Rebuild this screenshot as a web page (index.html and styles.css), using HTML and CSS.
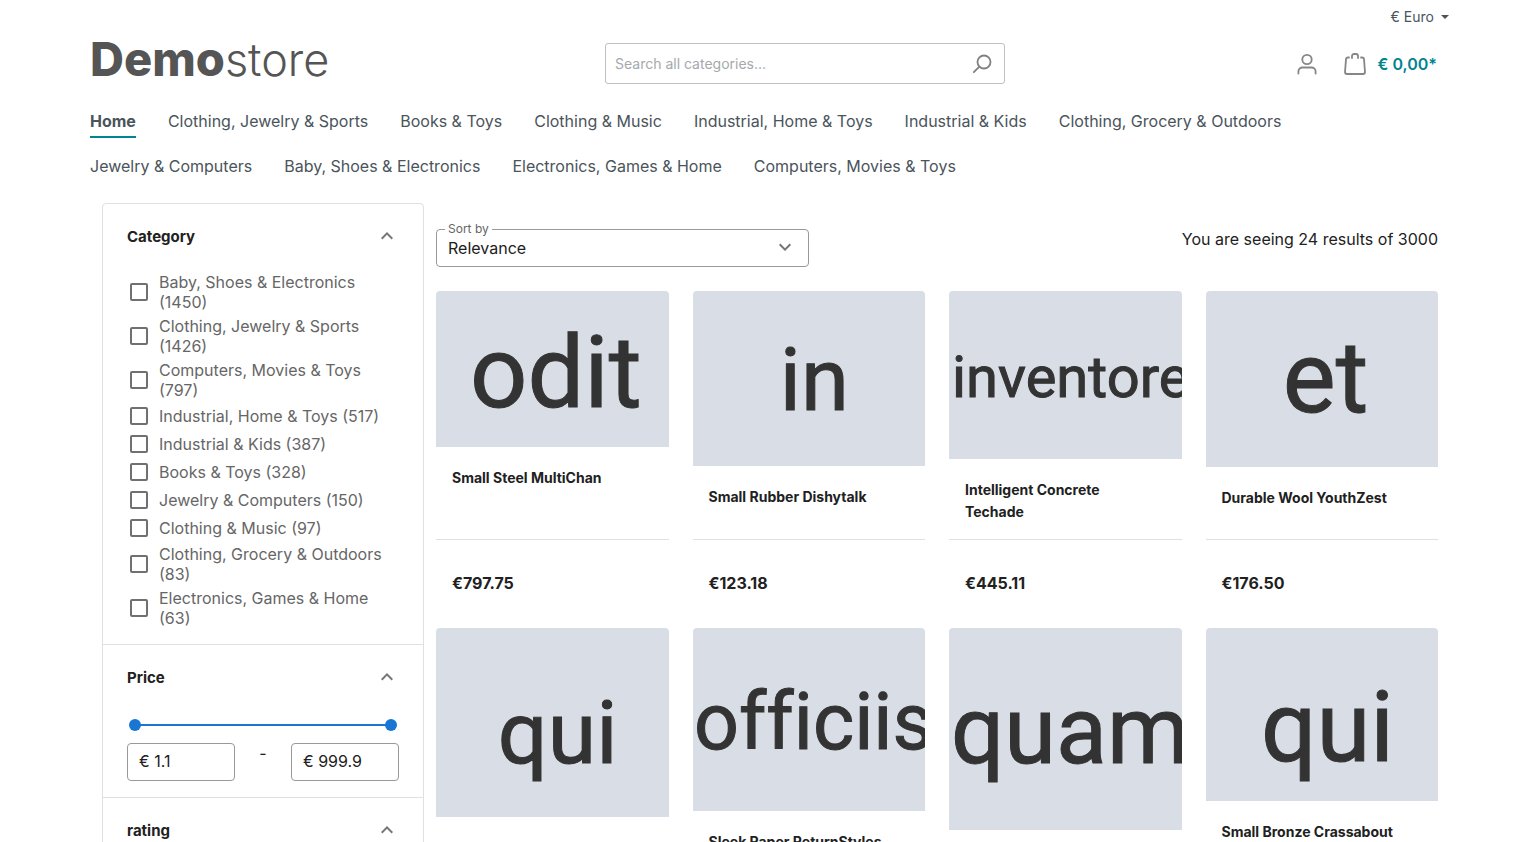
FILE: index.html
```html
<!DOCTYPE html>
<html lang="en">
<head>
<meta charset="utf-8">
<title>Demostore</title>
<meta name="viewport" content="width=device-width, initial-scale=1">
<link rel="stylesheet" href="styles.css">
</head>
<body>
<header class="header">
  <div class="top-bar">
    <button class="currency" type="button">€ Euro <span class="caret"></span></button>
  </div>
  <div class="header-row">
    <a class="logo" href="#"><b class="logo-strong">Demo</b>store</a>
    <form class="search" role="search">
      <input class="search-input" type="search" placeholder="Search all categories..." aria-label="Search all categories">
      <button class="icon-button search-button" type="submit" aria-label="Search">
        <svg width="22" height="22" viewBox="0 0 22 22" fill="none" stroke="#808080" stroke-width="1.800" stroke-linecap="round"><circle cx="13" cy="9" r="6.500"/><path d="M8.400 13.600l-5.600 5.600"/></svg>
      </button>
    </form>
    <div class="actions">
      <button class="icon-button" type="button" aria-label="Your account">
        <svg width="22" height="22" viewBox="0 0 22 22" fill="none" stroke="#868686" stroke-width="1.800" stroke-linecap="round"><circle cx="11" cy="6.500" r="4.700"/><path d="M2.400 20.500v-2a4 4 0 0 1 4-4h9.200a4 4 0 0 1 4 4v2"/></svg>
      </button>
      <a class="cart" href="#">
        <svg width="22" height="22" viewBox="0 0 22 22" fill="none" stroke="#868686" stroke-width="1.800" stroke-linecap="round" stroke-linejoin="round"><path d="M5 4.500H4A2 2 0 0 0 2 6.300L1 19a2 2 0 0 0 2 2h16a2 2 0 0 0 2-2L20 6.300a2 2 0 0 0-2-1.800h-1"/><path d="M8 5V3a2 2 0 0 1 2-2h2a2 2 0 0 1 2 2v2"/></svg>
        <span>€ 0,00*</span>
      </a>
    </div>
  </div>
  <nav class="nav">
    <a class="nav-link nav-link-active" href="#">Home</a>
    <a class="nav-link" href="#">Clothing, Jewelry &amp; Sports</a>
    <a class="nav-link" href="#">Books &amp; Toys</a>
    <a class="nav-link" href="#">Clothing &amp; Music</a>
    <a class="nav-link" href="#">Industrial, Home &amp; Toys</a>
    <a class="nav-link" href="#">Industrial &amp; Kids</a>
    <a class="nav-link" href="#">Clothing, Grocery &amp; Outdoors</a>
    <a class="nav-link" href="#">Jewelry &amp; Computers</a>
    <a class="nav-link" href="#">Baby, Shoes &amp; Electronics</a>
    <a class="nav-link" href="#">Electronics, Games &amp; Home</a>
    <a class="nav-link" href="#">Computers, Movies &amp; Toys</a>
  </nav>
</header>
<main class="content">
  <aside class="filters">
    <section class="filter">
      <button class="filter-head" type="button" aria-expanded="true">Category
        <svg class="chevron" viewBox="0 0 24 24"><path d="M12 8l-6 6 1.410 1.410L12 10.830l4.590 4.580L18 14z"/></svg>
      </button>
      <div class="options">
        <label class="option"><input class="check" type="checkbox"><span>Baby, Shoes &amp; Electronics (1450)</span></label>
        <label class="option"><input class="check" type="checkbox"><span>Clothing, Jewelry &amp; Sports (1426)</span></label>
        <label class="option"><input class="check" type="checkbox"><span>Computers, Movies &amp; Toys (797)</span></label>
        <label class="option"><input class="check" type="checkbox"><span>Industrial, Home &amp; Toys (517)</span></label>
        <label class="option"><input class="check" type="checkbox"><span>Industrial &amp; Kids (387)</span></label>
        <label class="option"><input class="check" type="checkbox"><span>Books &amp; Toys (328)</span></label>
        <label class="option"><input class="check" type="checkbox"><span>Jewelry &amp; Computers (150)</span></label>
        <label class="option"><input class="check" type="checkbox"><span>Clothing &amp; Music (97)</span></label>
        <label class="option"><input class="check" type="checkbox"><span>Clothing, Grocery &amp; Outdoors (83)</span></label>
        <label class="option"><input class="check" type="checkbox"><span>Electronics, Games &amp; Home (63)</span></label>
      </div>
    </section>
    <section class="filter">
      <button class="filter-head" type="button" aria-expanded="true">Price
        <svg class="chevron" viewBox="0 0 24 24"><path d="M12 8l-6 6 1.410 1.410L12 10.830l4.590 4.580L18 14z"/></svg>
      </button>
      <div class="slider">
        <input class="range" type="range" min="1.1" max="999.9" step="any" value="1.1" aria-label="Minimum price">
        <input class="range" type="range" min="1.1" max="999.9" step="any" value="999.9" aria-label="Maximum price">
      </div>
      <div class="price-fields">
        <input class="price-input" type="text" value="€ 1.1" aria-label="Price from">
        <span class="dash">-</span>
        <input class="price-input" type="text" value="€ 999.9" aria-label="Price to">
      </div>
    </section>
    <section class="filter">
      <button class="filter-head" type="button" aria-expanded="true">rating
        <svg class="chevron" viewBox="0 0 24 24"><path d="M12 8l-6 6 1.410 1.410L12 10.830l4.590 4.580L18 14z"/></svg>
      </button>
    </section>
  </aside>
  <div class="results">
    <div class="toolbar">
      <div class="sort">
        <label class="sort-label" for="sort">Sort by</label>
        <select class="sort-select" id="sort"><option>Relevance</option></select>
        <svg class="chevron sort-chevron" viewBox="0 0 24 24"><path d="M7.410 8.590L12 13.170l4.590-4.580L18 10l-6 6-6-6z"/></svg>
      </div>
      <p class="count">You are seeing 24 results of 3000</p>
    </div>
    <div class="products">
      <article class="product">
        <svg class="picture" viewBox="0 0 233 156"><text x="34" y="116" font-size="101">odit</text></svg>
        <h2 class="name">Small Steel MultiChan</h2>
        <p class="price">€797.75</p>
      </article>
      <article class="product">
        <svg class="picture" viewBox="0 0 233 175"><text x="87" y="119" font-size="87">in</text></svg>
        <h2 class="name">Small Rubber Dishytalk</h2>
        <p class="price">€123.18</p>
      </article>
      <article class="product">
        <svg class="picture" viewBox="0 0 233 168"><text x="3" y="106" font-size="58">inventore</text></svg>
        <h2 class="name">Intelligent Concrete Techade</h2>
        <p class="price">€445.11</p>
      </article>
      <article class="product">
        <svg class="picture" viewBox="0 0 233 176"><text x="77" y="121" font-size="100">et</text></svg>
        <h2 class="name">Durable Wool YouthZest</h2>
        <p class="price">€176.50</p>
      </article>
      <article class="product">
        <svg class="picture" viewBox="0 0 233 190"><text x="62" y="135" font-size="88">qui</text></svg>
        <h2 class="name">Gorgeous Copper Swissia</h2>
        <p class="price">€312.40</p>
      </article>
      <article class="product">
        <svg class="picture" viewBox="0 0 233 184"><text x="1" y="121" font-size="79">officiis</text></svg>
        <h2 class="name">Sleek Paper ReturnStyles</h2>
        <p class="price">€268.95</p>
      </article>
      <article class="product">
        <svg class="picture" viewBox="0 0 233 203"><text x="2" y="135" font-size="94">quam</text></svg>
        <h2 class="name">Rustic Linen Table</h2>
        <p class="price">€540.20</p>
      </article>
      <article class="product">
        <svg class="picture" viewBox="0 0 233 174"><text x="55" y="133" font-size="98">qui</text></svg>
        <h2 class="name">Small Bronze Crassabout</h2>
        <p class="price">€89.30</p>
      </article>
    </div>
  </div>
</main>
</body>
</html>
```
FILE: styles.css
```css
* { box-sizing: border-box; }

body {
  margin: 0;
  background: #fff;
  color: #212121;
  font: 16px/24px Inter, "Liberation Sans", sans-serif;
  overflow-x: hidden;
}

button, input, select { font: inherit; color: inherit; }
button { padding: 0; border: 0; background: none; cursor: pointer; }
a { color: inherit; text-decoration: none; }
h2, p { margin: 0; }

/* Header */
.header { padding: 0 88px 0 90px; color: #4a545b; }
.top-bar { display: flex; justify-content: flex-end; padding-top: 5px; }
.currency {
  display: flex;
  align-items: center;
  gap: 7px;
  font-size: 14px;
  line-height: 24px;
}
.caret { border: 4px solid transparent; border-top-color: #4a545b; border-bottom: 0; }

.header-row {
  display: grid;
  grid-template-columns: 515fr 400px 444fr;
  align-items: center;
  padding-top: 14px;
}
.logo { padding-bottom: 8px; color: #555; font-size: 45px; font-weight: 300; line-height: 32px; }
.logo-strong { font-size: 47px; font-weight: 800; }
.search {
  display: flex;
  align-items: center;
  height: 41px;
  padding: 0 11px 0 9px;
  border: 1px solid #bcc1c7;
  border-radius: 3px;
}
.search-input {
  flex: 1;
  min-width: 0;
  padding: 0;
  border: 0;
  outline: 0;
  background: none;
  font-size: 14px;
}
.search-input::placeholder { color: #a5a9ad; }
.icon-button { display: flex; }
.actions {
  display: flex;
  justify-content: flex-end;
  align-items: center;
  gap: 26px;
  padding-right: 12px;
}
.cart { display: flex; align-items: center; gap: 12px; color: #008490; font-weight: 600; }

.nav { display: flex; flex-wrap: wrap; column-gap: 32px; padding-top: 25px; }
.nav-link { margin-bottom: 16px; padding-bottom: 3px; border-bottom: 2px solid transparent; }
.nav-link-active { border-color: #008490; font-weight: 700; }

/* Page body */
.content {
  display: grid;
  grid-template-columns: 322px minmax(0, 1fr);
  gap: 12px;
  align-items: start;
  padding: 4px 99px 24px 102px;
}

/* Filters */
.filters { border: 1px solid #e0e0e0; border-radius: 4px; }
.filter { padding: 0 24px; }
.filter + .filter { border-top: 1px solid #e0e0e0; }
.filter-head {
  display: flex;
  justify-content: space-between;
  align-items: center;
  width: 100%;
  height: 66px;
  font-size: 15px;
  font-weight: 700;
}
.chevron { width: 24px; height: 24px; fill: #757575; }
.filter-head .chevron { margin-bottom: 2px; }
.options { padding-bottom: 14px; color: #666; line-height: 20px; }
.option { display: flex; align-items: center; gap: 11px; min-height: 28px; padding: 2px 0 2px 3px; }
.check {
  flex: none;
  width: 18px;
  height: 18px;
  margin: 0;
  appearance: none;
  border: 2px solid #707070;
  border-radius: 2px;
}
.check:checked { background: #1976d2; border-color: #1976d2; }

.slider { position: relative; height: 28px; margin: 0 2px; }
.slider::before {
  content: "";
  position: absolute;
  inset: 13px 6px;
  background: #1976d2;
}
.range {
  position: absolute;
  inset: 0;
  width: 100%;
  height: 28px;
  margin: 0;
  appearance: none;
  background: none;
  pointer-events: none;
}
.range::-webkit-slider-thumb {
  width: 12px;
  height: 12px;
  appearance: none;
  border-radius: 50%;
  background: #1976d2;
  pointer-events: auto;
}
.price-fields { display: flex; justify-content: space-between; padding: 4px 0 16px; }
.price-input {
  width: 108px;
  height: 38px;
  padding: 0 11px 2px;
  border: 1px solid #999;
  border-radius: 4px;
  background: none;
}
.dash { line-height: 20px; }

/* Results */
.toolbar {
  display: flex;
  justify-content: space-between;
  align-items: flex-start;
  padding: 24px 0;
}
.sort { position: relative; width: 373px; margin-top: 2px; }
.sort-label {
  position: absolute;
  top: -8px;
  left: 9px;
  padding: 0 3px;
  background: #fff;
  color: #666;
  font-size: 12px;
  line-height: 16px;
}
.sort-select {
  display: block;
  width: 100%;
  height: 38px;
  padding: 0 40px 0 11px;
  appearance: none;
  border: 1px solid #999;
  border-radius: 4px;
  background: none;
}
.sort-chevron { position: absolute; top: 6px; right: 12px; pointer-events: none; }

.products {
  display: grid;
  grid-template-columns: repeat(4, minmax(0, 1fr));
  gap: 24px;
}
.product { display: flex; flex-direction: column; }
.picture {
  display: block;
  width: 100%;
  border-radius: 4px 4px 0 0;
  background: #d9dde6;
  fill: #333;
  stroke: #333;
  font-family: Roboto, sans-serif;
  font-variant-ligatures: none;
}
.name {
  flex: 1;
  padding: 20px 36px 16px 16px;
  font-size: 14px;
  font-weight: 700;
  line-height: 22px;
}
.price {
  padding: 31px 16px 9px;
  border-top: 1px solid #e0e0e0;
  font-weight: 700;
}
```
